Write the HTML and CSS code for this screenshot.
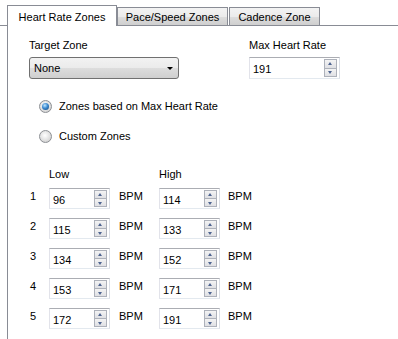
FILE: index.html
```html
<!DOCTYPE html>
<html>
<head>
<meta charset="utf-8">
<title>Heart Rate Zones</title>
<link rel="stylesheet" href="styles.css">
</head>
<body>
<div class="tabs">
  <div class="tab tab-hr active">Heart Rate Zones</div>
  <div class="tab tab-pace">Pace/Speed Zones</div>
  <div class="tab tab-cad">Cadence Zone</div>
</div>
<div class="pane">
  <div class="top">
    <div class="field">
      <div class="label">Target Zone</div>
      <div class="select"><span>None</span><span class="caret"></span></div>
    </div>
    <div class="field">
      <div class="label">Max Heart Rate</div>
      <div class="spin spin-max"><span class="val">191</span><span class="btns"><span class="btn up"></span><span class="btn down"></span></span></div>
    </div>
  </div>
  <div class="radios">
    <div class="radio-row"><span class="radio checked"></span><span>Zones based on Max Heart Rate</span></div>
    <div class="radio-row"><span class="radio"></span><span>Custom Zones</span></div>
  </div>
  <div class="zones">
    <div></div><div class="colhead">Low</div><div></div><div class="colhead">High</div><div></div>

    <div class="num">1</div>
    <div class="spin"><span class="val">96</span><span class="btns"><span class="btn up"></span><span class="btn down"></span></span></div>
    <div class="unit">BPM</div>
    <div class="spin"><span class="val">114</span><span class="btns"><span class="btn up"></span><span class="btn down"></span></span></div>
    <div class="unit unit-hi">BPM</div>

    <div class="num">2</div>
    <div class="spin"><span class="val">115</span><span class="btns"><span class="btn up"></span><span class="btn down"></span></span></div>
    <div class="unit">BPM</div>
    <div class="spin"><span class="val">133</span><span class="btns"><span class="btn up"></span><span class="btn down"></span></span></div>
    <div class="unit unit-hi">BPM</div>

    <div class="num">3</div>
    <div class="spin"><span class="val">134</span><span class="btns"><span class="btn up"></span><span class="btn down"></span></span></div>
    <div class="unit">BPM</div>
    <div class="spin"><span class="val">152</span><span class="btns"><span class="btn up"></span><span class="btn down"></span></span></div>
    <div class="unit unit-hi">BPM</div>

    <div class="num">4</div>
    <div class="spin"><span class="val">153</span><span class="btns"><span class="btn up"></span><span class="btn down"></span></span></div>
    <div class="unit">BPM</div>
    <div class="spin"><span class="val">171</span><span class="btns"><span class="btn up"></span><span class="btn down"></span></span></div>
    <div class="unit unit-hi">BPM</div>

    <div class="num">5</div>
    <div class="spin"><span class="val">172</span><span class="btns"><span class="btn up"></span><span class="btn down"></span></span></div>
    <div class="unit">BPM</div>
    <div class="spin"><span class="val">191</span><span class="btns"><span class="btn up"></span><span class="btn down"></span></span></div>
    <div class="unit unit-hi">BPM</div>
  </div>
</div>
</body>
</html>
```

FILE: styles.css
```css
* { box-sizing: border-box; }

body {
  margin: 0;
  width: 398px;
  height: 339px;
  overflow: hidden;
  background: #fff;
  color: #000;
  font-family: "Liberation Sans", Arial, sans-serif;
  font-size: 11px;
  line-height: 13px;
}

/* ---------- tabs ---------- */
.tabs {
  display: flex;
  align-items: flex-end;
  height: 26px;
  padding-left: 7px;
  border-bottom: 1px solid #898c95;
}

.tab {
  height: 18px;
  padding-top: 3px;
  text-align: center;
  border: 1px solid #898c95;
  border-bottom: none;
  background: linear-gradient(#f3f3f3 0%, #ebebeb 50%, #dddddd 51%, #cfcfcf 100%);
}

.tab.active {
  position: relative;
  height: 21px;
  margin-bottom: -1px;
  padding-top: 5px;
  background: #fff;
}

.tab-hr { width: 110px; }
.tab-pace { width: 111px; }
.tab-cad { width: 91px; margin-left: 1px; }

/* ---------- pane ---------- */
.pane {
  margin-left: 7px;
  height: 313px;
  border-left: 1px solid #898c95;
  padding: 13px 0 0 21px;
}

.top {
  display: grid;
  grid-template-columns: 220px 91px;
}

.label {
  height: 13px;
  margin-bottom: 5px;
}

.select {
  width: 150px;
  height: 22px;
  border: 1px solid #707070;
  border-radius: 3px;
  background: linear-gradient(#f2f2f2 0%, #ebebeb 50%, #dddddd 51%, #cfcfcf 100%);
  display: flex;
  align-items: center;
  justify-content: space-between;
  padding: 0 5px 0 4px;
}

.caret {
  width: 0;
  height: 0;
  margin-top: 1px;
  border-left: 3px solid transparent;
  border-right: 3px solid transparent;
  border-top: 3px solid #000;
}

/* ---------- spin boxes ---------- */
.spin {
  position: relative;
  width: 61px;
  height: 21px;
  border: 1px solid;
  border-color: #abadb3 #dbdfe6 #e3e9ef #e2e3ea;
  background: #fff;
  padding: 5px 0 0 3px;
}

.spin-max {
  width: 91px;
  height: 22px;
}

.btns {
  position: absolute;
  right: 2px;
  top: 1px;
  bottom: 1px;
  width: 13px;
  display: flex;
  flex-direction: column;
}

.btn {
  flex: 1;
  position: relative;
  border: 1px solid #adb1ba;
  background: linear-gradient(#f4f4f4, #dfe0e4);
}

.btn.down { border-top: none; }

.btn::after {
  content: "";
  position: absolute;
  left: 3px;
  top: 50%;
  width: 0;
  height: 0;
  border-left: 2.5px solid transparent;
  border-right: 2.5px solid transparent;
}

.btn.up::after {
  margin-top: -2px;
  border-bottom: 3px solid #4e6490;
}

.btn.down::after {
  margin-top: -1px;
  border-top: 3px solid #4e6490;
}

/* ---------- radios ---------- */
.radios {
  margin-top: 21px;
  padding-left: 10px;
  display: flex;
  flex-direction: column;
  gap: 17px;
}

.radio-row {
  display: flex;
  align-items: flex-start;
  gap: 7px;
  height: 13px;
}

.radio {
  position: relative;
  width: 13px;
  height: 13px;
  border-radius: 50%;
  border: 1px solid #8c8f94;
  background: radial-gradient(circle at 45% 40%, #ffffff 0%, #e6e6e6 45%, #c6c6c6 100%);
}

.radio.checked::after {
  content: "";
  position: absolute;
  left: 2px;
  top: 2px;
  width: 7px;
  height: 7px;
  border-radius: 50%;
  background: radial-gradient(circle at 40% 35%, #bfe6ff 0%, #3b8ad1 45%, #0f3d6e 100%);
}

/* ---------- zones ---------- */
.zones {
  margin-top: 26px;
  display: grid;
  grid-template-columns: 20px 61px 49px 61px auto;
  grid-template-rows: 10px repeat(5, 21px);
  row-gap: 9px;
}

.zones .colhead {
  height: 10px;
  overflow: visible;
  margin-top: -1px;
}

.num {
  padding: 2px 0 0 1px;
}

.unit {
  padding: 2px 0 0 9px;
}

.unit-hi {
  padding-left: 8px;
}
```
